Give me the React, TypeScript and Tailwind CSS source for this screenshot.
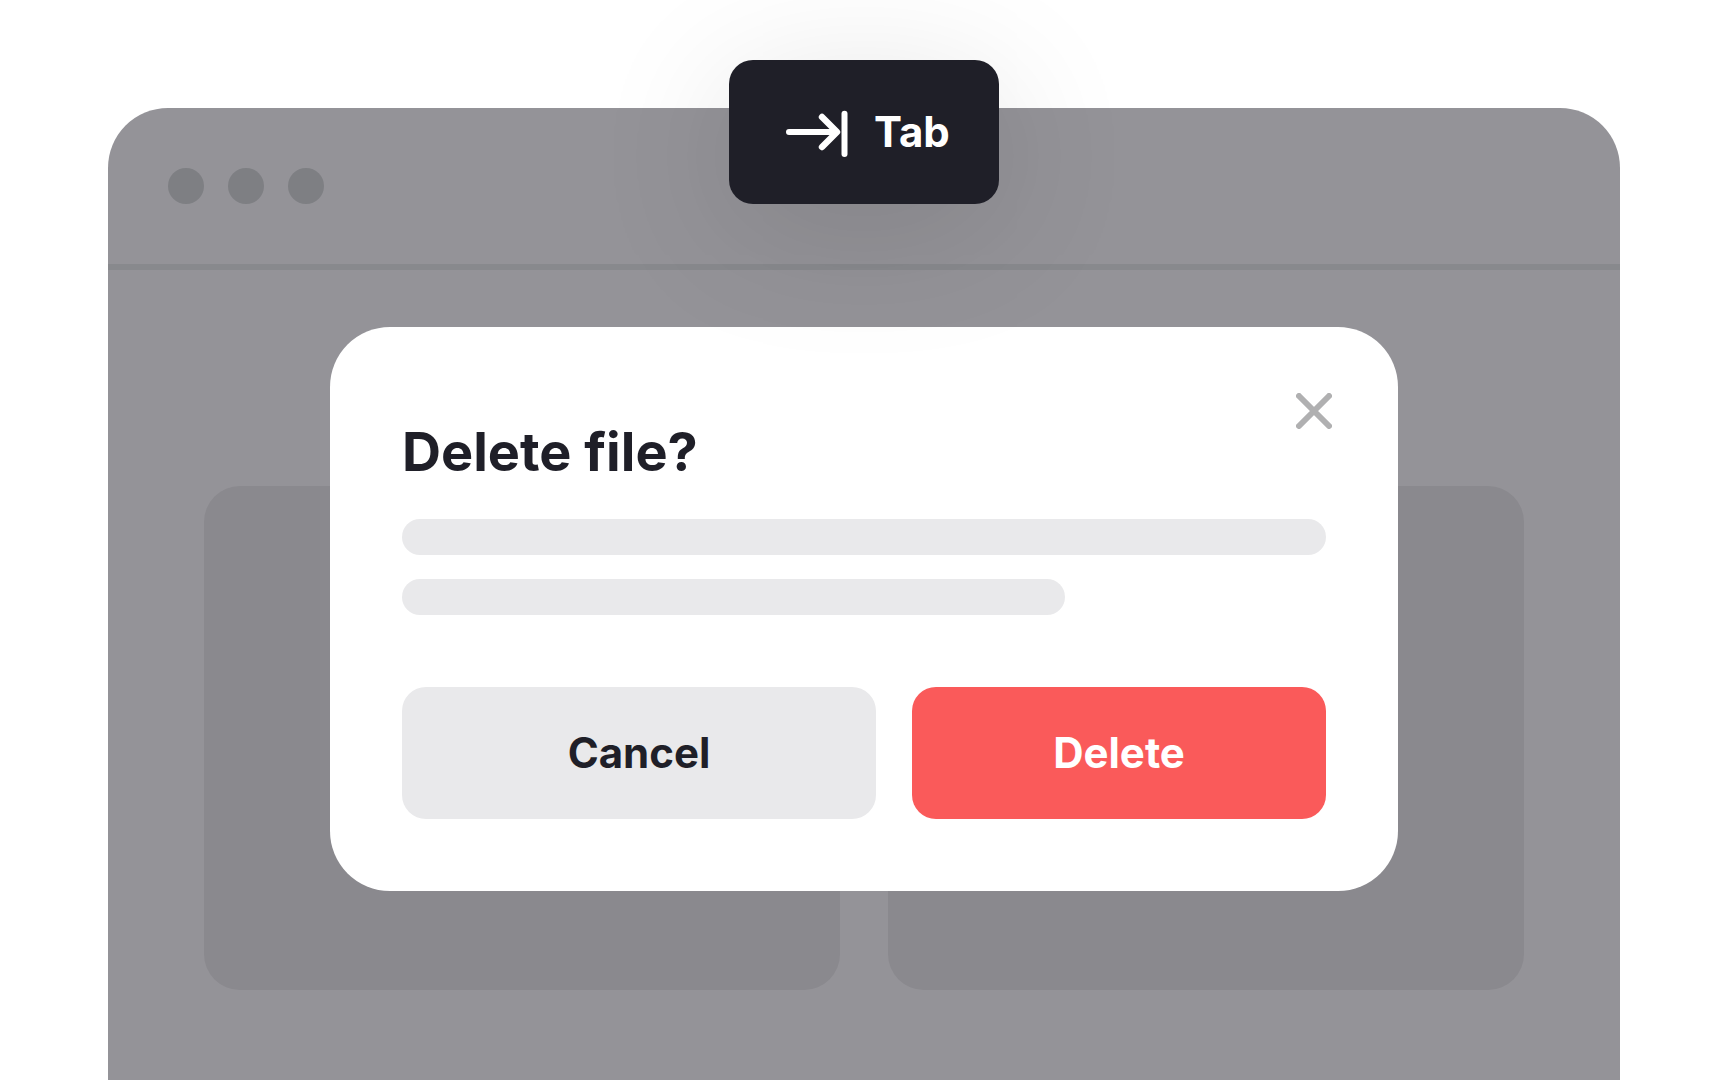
const windowDots = [1, 2, 3];
const cards = [1, 2];

const TabKey = () => {
  return (
    <div className="absolute -top-12 left-1/2 flex h-36 w-[270px] -translate-x-1/2 items-center gap-[26px] rounded-3xl bg-[#1f1f28] pl-[57px] text-white shadow-[0_24px_144px_rgba(0,0,0,0.12)]">
      <svg
        className="h-[54px] w-[62px] shrink-0"
        viewBox="0 0 62 54"
        fill="none"
        stroke="currentColor"
        strokeWidth="6"
        strokeLinecap="round"
        strokeLinejoin="round"
        aria-hidden="true"
      >
        <path d="M3 27h47" />
        <path d="M36 12l15 15l-15 15" strokeWidth="6.4" />
        <path d="M58.5 8.7v40.3" />
      </svg>
      <kbd className="font-[Inter,sans-serif] text-[42px] leading-[54px] font-bold">Tab</kbd>
    </div>
  );
};

const DeleteDialog = () => {
  return (
    <div
      role="dialog"
      aria-labelledby="dialog-title"
      className="absolute top-[219px] left-1/2 w-full max-w-[1068px] -translate-x-1/2 rounded-[60px] bg-white px-[72px] pt-[90px] pb-[72px]"
    >
      <button type="button" aria-label="Close" className="absolute top-[66px] right-[66px] text-[#b0b0b1]">
        <svg
          className="size-9"
          viewBox="0 0 36 36"
          fill="none"
          stroke="currentColor"
          strokeWidth="6"
          strokeLinecap="round"
        >
          <path d="M3 3l30 30M33 3L3 33" />
        </svg>
      </button>

      <h2 id="dialog-title" className="text-[54px] leading-[70px] font-bold">
        Delete file?
      </h2>

      <div className="mt-8 space-y-6">
        <div className="h-9 rounded-full bg-[#e9e9eb]" />
        <div className="h-9 w-full max-w-[663px] rounded-full bg-[#e9e9eb]" />
      </div>

      <div className="mt-[72px] flex gap-9 text-[42px] leading-[54px] font-bold">
        <button type="button" className="h-[132px] flex-[474] rounded-3xl bg-[#e9e9eb]">
          Cancel
        </button>
        <button type="button" className="h-[132px] flex-[414] rounded-3xl bg-[#fa5a5a] text-white">
          Delete
        </button>
      </div>
    </div>
  );
};

const App = () => {
  return (
    <div className="flex min-h-screen flex-col bg-white px-[108px] pt-[108px] font-[Inter,sans-serif] text-[#1f1f28]">
      <div className="relative flex-1 rounded-t-[60px] bg-[#949398]">
        <header className="flex h-[162px] gap-6 border-b-6 border-[#88898d] px-[60px] pt-[60px]">
          {windowDots.map((dot) => (
            <span key={dot} className="size-9 rounded-full bg-[#7e7f83]" />
          ))}
        </header>

        <main className="grid grid-cols-2 gap-12 px-24 pt-[216px] pb-[90px]">
          {cards.map((card) => (
            <div key={card} className="h-[504px] rounded-[36px] bg-[#8a898e]" />
          ))}
        </main>

        <DeleteDialog />
        <TabKey />
      </div>
    </div>
  );
};

export default App;
